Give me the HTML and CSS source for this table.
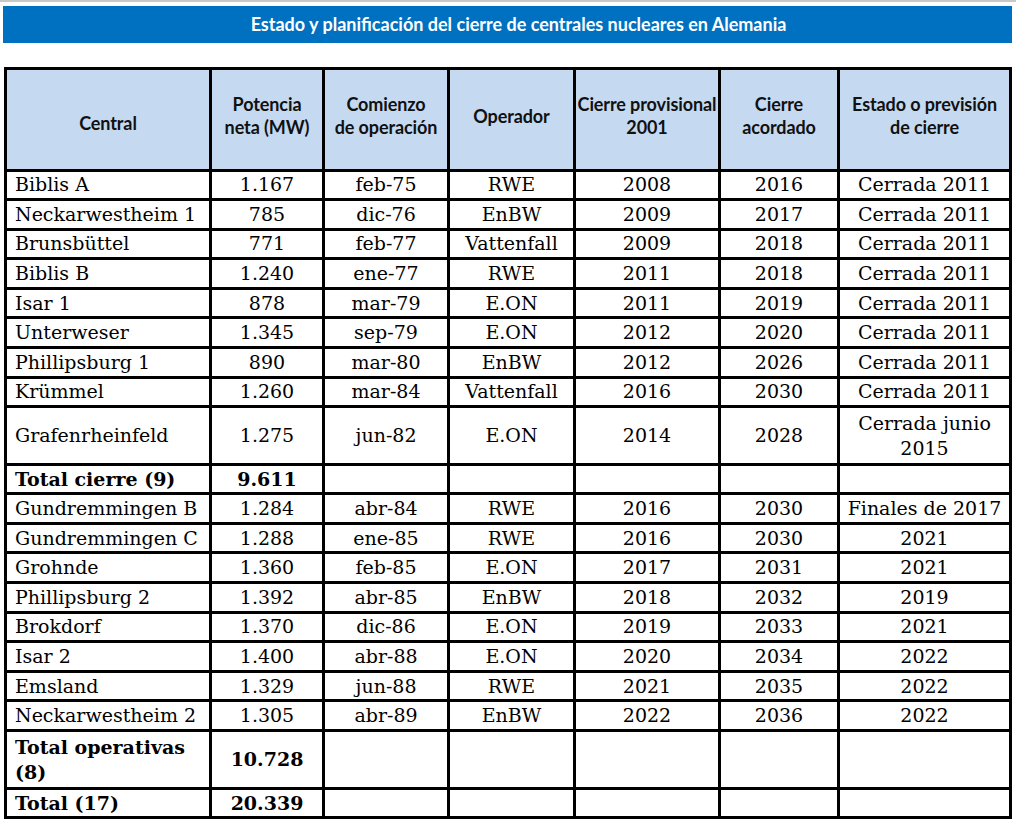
FILE: index.html
```html
<!DOCTYPE html>
<html lang="es">
<head>
<meta charset="utf-8">
<title>Estado y planificación del cierre de centrales nucleares en Alemania</title>
<link rel="stylesheet" href="styles.css">
</head>
<body>
<div class="topline"></div>
<div class="titlebar">Estado y planificación del cierre de centrales nucleares en Alemania</div>
<table class="grid">
<colgroup>
<col class="c1"><col class="c2"><col class="c3"><col class="c4"><col class="c5"><col class="c6"><col class="c7">
</colgroup>
<thead>
<tr class="hrow">
<th class="low">Central</th>
<th>Potencia<br>neta (MW)</th>
<th>Comienzo<br>de operación</th>
<th>Operador</th>
<th>Cierre provisional<br>2001</th>
<th>Cierre<br>acordado</th>
<th>Estado o previsión<br>de cierre</th>
</tr>
</thead>
<tbody>
<tr class="r"><td class="name">Biblis A</td><td>1.167</td><td>feb-75</td><td>RWE</td><td>2008</td><td>2016</td><td>Cerrada 2011</td></tr>
<tr class="r"><td class="name">Neckarwestheim 1</td><td>785</td><td>dic-76</td><td>EnBW</td><td>2009</td><td>2017</td><td>Cerrada 2011</td></tr>
<tr class="r"><td class="name">Brunsbüttel</td><td>771</td><td>feb-77</td><td>Vattenfall</td><td>2009</td><td>2018</td><td>Cerrada 2011</td></tr>
<tr class="r"><td class="name">Biblis B</td><td>1.240</td><td>ene-77</td><td>RWE</td><td>2011</td><td>2018</td><td>Cerrada 2011</td></tr>
<tr class="r"><td class="name">Isar 1</td><td>878</td><td>mar-79</td><td>E.ON</td><td>2011</td><td>2019</td><td>Cerrada 2011</td></tr>
<tr class="r"><td class="name">Unterweser</td><td>1.345</td><td>sep-79</td><td>E.ON</td><td>2012</td><td>2020</td><td>Cerrada 2011</td></tr>
<tr class="r"><td class="name">Phillipsburg 1</td><td>890</td><td>mar-80</td><td>EnBW</td><td>2012</td><td>2026</td><td>Cerrada 2011</td></tr>
<tr class="r"><td class="name">Krümmel</td><td>1.260</td><td>mar-84</td><td>Vattenfall</td><td>2016</td><td>2030</td><td>Cerrada 2011</td></tr>
<tr class="r2"><td class="name">Grafenrheinfeld</td><td>1.275</td><td>jun-82</td><td>E.ON</td><td>2014</td><td>2028</td><td>Cerrada junio 2015</td></tr>
<tr class="rt"><td class="name total">Total cierre (9)</td><td class="total">9.611</td><td></td><td></td><td></td><td></td><td></td></tr>
<tr class="r"><td class="name">Gundremmingen B</td><td>1.284</td><td>abr-84</td><td>RWE</td><td>2016</td><td>2030</td><td>Finales de 2017</td></tr>
<tr class="r"><td class="name">Gundremmingen C</td><td>1.288</td><td>ene-85</td><td>RWE</td><td>2016</td><td>2030</td><td>2021</td></tr>
<tr class="r"><td class="name">Grohnde</td><td>1.360</td><td>feb-85</td><td>E.ON</td><td>2017</td><td>2031</td><td>2021</td></tr>
<tr class="r"><td class="name">Phillipsburg 2</td><td>1.392</td><td>abr-85</td><td>EnBW</td><td>2018</td><td>2032</td><td>2019</td></tr>
<tr class="r"><td class="name">Brokdorf</td><td>1.370</td><td>dic-86</td><td>E.ON</td><td>2019</td><td>2033</td><td>2021</td></tr>
<tr class="r"><td class="name">Isar 2</td><td>1.400</td><td>abr-88</td><td>E.ON</td><td>2020</td><td>2034</td><td>2022</td></tr>
<tr class="r"><td class="name">Emsland</td><td>1.329</td><td>jun-88</td><td>RWE</td><td>2021</td><td>2035</td><td>2022</td></tr>
<tr class="r"><td class="name">Neckarwestheim 2</td><td>1.305</td><td>abr-89</td><td>EnBW</td><td>2022</td><td>2036</td><td>2022</td></tr>
<tr class="r2"><td class="name total">Total operativas (8)</td><td class="total">10.728</td><td></td><td></td><td></td><td></td><td></td></tr>
<tr class="rt"><td class="name total">Total (17)</td><td class="total">20.339</td><td></td><td></td><td></td><td></td><td></td></tr>
</tbody>
</table>
</body>
</html>
```

FILE: styles.css
```css
html, body {
  margin: 0;
  padding: 0;
  background: #ffffff;
}

.topline {
  height: 2px;
  background: #c8c8c8;
}

.titlebar {
  margin: 4px 0 0 3px;
  width: 1009px;
  height: 37px;
  background: #0070c0;
  color: #ffffff;
  font-family: Lato, "Open Sans", sans-serif;
  font-weight: 700;
  font-size: 18px;
  line-height: 37px;
  text-align: center;
  box-sizing: border-box;
  padding-left: 22px;
}

.grid {
  margin: 24px 0 0 4px;
  width: 1008px;
  table-layout: fixed;
  border-collapse: collapse;
  border: 3px solid #000;
}

.c1 { width: 205px; }
.c2 { width: 113px; }
.c3 { width: 125px; }
.c4 { width: 126px; }
.c5 { width: 145px; }
.c6 { width: 119px; }
.c7 { width: 172px; }

.grid th,
.grid td {
  border: 3px solid #000;
  padding: 0 2px;
  text-align: center;
  vertical-align: middle;
  overflow: hidden;
}

.grid th {
  background: #c5d9f1;
  color: #111;
  font-family: Lato, "Open Sans", sans-serif;
  font-weight: 700;
  font-size: 18px;
  line-height: 23px;
  padding: 0 0 6px;
  white-space: nowrap;
  letter-spacing: -0.1px;
}

.grid th.low {
  padding-bottom: 0;
  padding-top: 8px;
}

.hrow { height: 101.5px; }

.grid td {
  font-family: "DejaVu Serif", "Liberation Serif", serif;
  font-size: 19px;
  line-height: 25px;
  color: #000;
}

.grid td.name {
  text-align: left;
  padding-left: 8px;
}

.grid td.total {
  font-weight: 700;
}

.r { height: 29.6px; }
.r2 { height: 58px; }
.rt { height: 29px; }
```
